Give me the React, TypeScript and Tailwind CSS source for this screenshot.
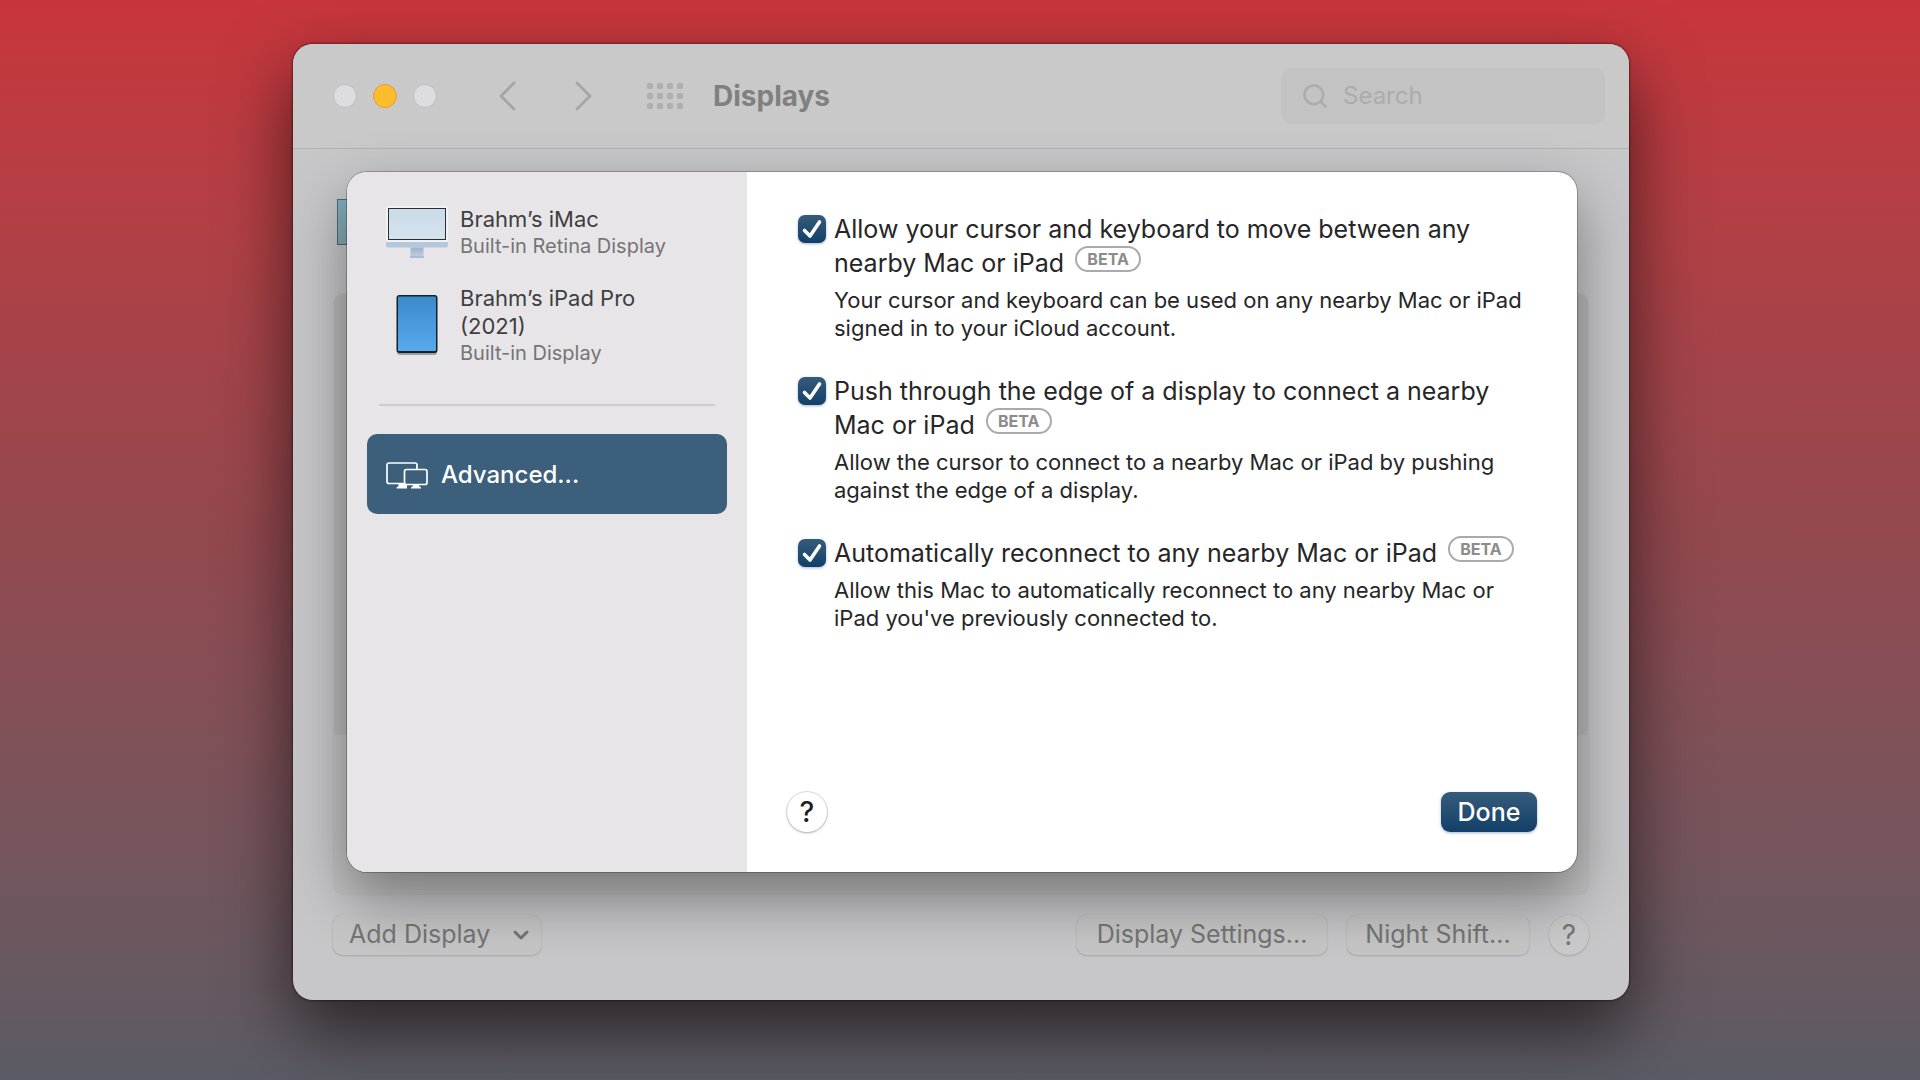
import { ChevronDown, Search } from "lucide-react";
import { useState } from "react";
import type { ReactNode } from "react";

interface SharingOption {
  id: string;
  title: string;
  description: string;
}

interface DisplayDevice {
  name: string;
  detail: string;
  icon: ReactNode;
}

const SHARING_OPTIONS: SharingOption[] = [
  {
    id: "cursor",
    title: "Allow your cursor and keyboard to move between any nearby Mac or iPad",
    description:
      "Your cursor and keyboard can be used on any nearby Mac or iPad signed in to your iCloud account.",
  },
  {
    id: "push",
    title: "Push through the edge of a display to connect a nearby Mac or iPad",
    description:
      "Allow the cursor to connect to a nearby Mac or iPad by pushing against the edge of a display.",
  },
  {
    id: "reconnect",
    title: "Automatically reconnect to any nearby Mac or iPad",
    description:
      "Allow this Mac to automatically reconnect to any nearby Mac or iPad you've previously connected to.",
  },
];

function IMacIcon() {
  return (
    <svg viewBox="0 0 62 54" className="w-[62px]" aria-hidden="true">
      <defs>
        <linearGradient id="imac-screen" x1="0" y1="0" x2="0" y2="1">
          <stop offset="0" stopColor="#c9dbe8" />
          <stop offset="1" stopColor="#d5e3ee" />
        </linearGradient>
        <linearGradient id="imac-stand" x1="0" y1="0" x2="0" y2="1">
          <stop offset="0" stopColor="#9db3cc" />
          <stop offset="1" stopColor="#bccde0" />
        </linearGradient>
      </defs>
      <path d="M0 37V3a2 2 0 0 1 2-2h58a2 2 0 0 1 2 2v34z" fill="#f0f1f4" />
      <rect x="2.5" y="3.5" width="57" height="31" fill="url(#imac-screen)" stroke="#2b2d30" />
      <path d="M0 37h62v3.500a2 2 0 0 1-2 2H2a2 2 0 0 1-2-2z" fill="#b4c7db" />
      <rect x="24.500" y="42.500" width="13" height="9" fill="url(#imac-stand)" />
      <path d="M24 51h14v1a1 1 0 0 1-1 1H25a1 1 0 0 1-1-1z" fill="#a9bdd3" />
    </svg>
  );
}

function IPadIcon() {
  return (
    <svg viewBox="0 0 44 62" className="w-11" aria-hidden="true">
      <defs>
        <linearGradient id="ipad-screen" x1="0" y1="0" x2="0" y2="1">
          <stop offset="0" stopColor="#3a8bcc" />
          <stop offset="1" stopColor="#58a9ec" />
        </linearGradient>
      </defs>
      <rect x="2" y="3" width="40" height="58" rx="3" fill="#9a9ca1" />
      <rect x="1.500" y="1" width="41" height="58" rx="3" fill="#14202c" />
      <rect x="3" y="2.500" width="38" height="54.500" rx="1" fill="url(#ipad-screen)" />
    </svg>
  );
}

function LinkedDisplaysIcon() {
  return (
    <svg
      viewBox="0 0 42 27"
      className="w-[42px]"
      fill="none"
      stroke="currentColor"
      strokeWidth="1.700"
      aria-hidden="true"
    >
      <path d="M17 21.500H3a2 2 0 0 1-2-2V3a2 2 0 0 1 2-2h26a2 2 0 0 1 2 2v4" />
      <rect x="18.500" y="7.500" width="22.500" height="15" rx="2" />
      <path d="M12.500 21h6v2h2.500v3.500H10.500v-1l2-1.500z" fill="currentColor" stroke="none" />
      <path d="M27 23h6l.5 1.500 1.500 1v1H25v-1l1.500-1z" fill="currentColor" stroke="none" />
    </svg>
  );
}

function AppGridIcon() {
  return (
    <svg viewBox="0 0 36 26" className="w-9" fill="currentColor" aria-hidden="true">
      {[0, 10, 20].map((y) =>
        [0, 10, 20, 30].map((x) => (
          <rect key={`${x}-${y}`} x={x} y={y} width="6" height="6" rx="1.500" />
        )),
      )}
    </svg>
  );
}

function NavChevron({ path }: { path: string }) {
  return (
    <svg
      viewBox="0 0 18 30"
      className="w-[18px]"
      fill="none"
      stroke="currentColor"
      strokeWidth="2.800"
      strokeLinecap="round"
      strokeLinejoin="round"
      aria-hidden="true"
    >
      <path d={path} />
    </svg>
  );
}

const DEVICES: DisplayDevice[] = [
  { name: "Brahm’s iMac", detail: "Built-in Retina Display", icon: <IMacIcon /> },
  { name: "Brahm’s iPad Pro (2021)", detail: "Built-in Display", icon: <IPadIcon /> },
];

function TitleBar() {
  return (
    <header className="flex h-[105px] items-center border-b border-[#b3b3b3] bg-[#c9c9c9] pr-6 pl-10">
      <div className="flex gap-4">
        <button
          type="button"
          aria-label="Close"
          className="size-6 rounded-full border border-[#bdbcbf] bg-[#dddce0]"
        />
        <button
          type="button"
          aria-label="Minimize"
          className="size-6 rounded-full border border-[#e0a02c] bg-[#fdbc2e]"
        />
        <button
          type="button"
          aria-label="Zoom"
          className="size-6 rounded-full border border-[#bdbcbf] bg-[#dddce0]"
        />
      </div>
      <nav className="ml-8 flex items-center text-[#a5a5a5]">
        <button type="button" aria-label="Back" className="flex w-[76px] justify-center">
          <NavChevron path="M16 2 3 15l13 13" />
        </button>
        <button type="button" aria-label="Forward" className="flex w-[76px] justify-center">
          <NavChevron path="m3 2 13 13L3 28" />
        </button>
        <button type="button" aria-label="Show all" className="ml-[26px] text-[#afafaf]">
          <AppGridIcon />
        </button>
      </nav>
      <h1 className="ml-[30px] text-[28px] font-bold text-[#808080]">Displays</h1>
      <label className="ml-auto flex h-14 w-[324px] items-center gap-[14px] rounded-[10px] bg-[#c3c3c3] px-5 text-[#acacac]">
        <Search className="size-7 shrink-0" strokeWidth={2.2} />
        <input
          type="search"
          aria-label="Search"
          placeholder="Search"
          className="w-full min-w-0 bg-transparent text-2xl outline-none placeholder:text-[#acacac]"
        />
      </label>
    </header>
  );
}

function DeviceRow({ name, detail, icon }: DisplayDevice) {
  return (
    <li className="flex items-center gap-3">
      <span className="flex w-[63px] shrink-0 justify-center">{icon}</span>
      <div className="max-w-[200px]">
        <p className="text-[22px] leading-7 text-[#3f3e41]">{name}</p>
        <p className="text-xl leading-[26px] whitespace-nowrap text-[#757477]">{detail}</p>
      </div>
    </li>
  );
}

function Sidebar() {
  return (
    <aside className="w-[400px] shrink-0 bg-[#e7e5e8] px-5 pt-[33px]">
      <ul className="flex flex-col gap-[25px] pl-[18px]">
        {DEVICES.map((device) => (
          <DeviceRow key={device.name} {...device} />
        ))}
      </ul>
      <hr className="mx-3 mt-[38px] mb-7 border-t-2 border-[#cdcbce]" />
      <button
        type="button"
        className="flex h-20 w-full items-center gap-[13px] rounded-[10px] bg-[#3c5f7c] px-[19px] pt-0.5 text-2xl font-medium text-white"
      >
        <LinkedDisplaysIcon />
        Advanced...
      </button>
    </aside>
  );
}

function OptionRow({ id, title, description }: SharingOption) {
  const [checked, setChecked] = useState(true);

  return (
    <div className="flex items-start gap-2">
      <span className="relative mt-[3px] size-7 shrink-0">
        <input
          id={id}
          type="checkbox"
          checked={checked}
          onChange={(event) => setChecked(event.target.checked)}
          aria-describedby={`${id}-description`}
          className="block size-7 appearance-none rounded-[7px] border border-gray-300 bg-white shadow-[0_1px_3px_#1b4a7a66] checked:border-0 checked:bg-linear-to-b checked:from-[#365c7b] checked:to-[#123f68]"
        />
        {checked ? (
          <svg
            viewBox="0 0 28 28"
            className="pointer-events-none absolute inset-0 size-7"
            fill="none"
            stroke="white"
            strokeWidth="3.600"
            strokeLinecap="round"
            strokeLinejoin="round"
            aria-hidden="true"
          >
            <path d="M6.500 15.500 12 21 21.500 7" />
          </svg>
        ) : null}
      </span>
      <div>
        <label htmlFor={id} className="block text-[25px] leading-[34px] text-[#262626]">
          {title}{" "}
          <span className="ml-1 inline-flex h-[26px] w-[66px] items-center justify-center rounded-full border-2 border-[#aaaaaa] align-[7px] text-base leading-none font-bold text-[#8c8c8c]">
            BETA
          </span>
        </label>
        <p id={`${id}-description`} className="mt-1.5 text-[22px] leading-7 text-[#262626]">
          {description}
        </p>
      </div>
    </div>
  );
}

function AdvancedSheet() {
  return (
    <section
      role="dialog"
      aria-label="Advanced display options"
      className="absolute top-32 right-[52px] left-[54px] flex min-h-[700px] overflow-hidden rounded-[20px] bg-white shadow-[0_0_0_1px_#00000040,0_26px_60px_#00000066]"
    >
      <Sidebar />
      <div className="flex grow flex-col justify-between pt-10 pr-10 pb-10 pl-[51px]">
        <div className="flex flex-col gap-8">
          {SHARING_OPTIONS.map((option) => (
            <OptionRow key={option.id} {...option} />
          ))}
        </div>
        <div className="-ml-[11px] flex items-center justify-between">
          <button
            type="button"
            aria-label="Help"
            className="size-10 rounded-full bg-white text-[28px] leading-10 font-medium text-[#1f1f1f] shadow-[0_0_0_1px_#0000001a,0_1px_3px_#00000040]"
          >
            ?
          </button>
          <button
            type="button"
            className="h-10 w-24 rounded-[9px] bg-linear-to-b from-[#365c7b] to-[#123f68] text-[25px] leading-[38px] font-medium text-white shadow-[0_1px_3px_#1b4a7a66]"
          >
            Done
          </button>
        </div>
      </div>
    </section>
  );
}

function Footer() {
  return (
    <footer className="flex h-10 items-center text-[25px] text-[#757575]">
      <button
        type="button"
        className="flex h-10 w-[208px] items-center justify-between rounded-[9px] bg-[#c6c6c6] pr-2 pl-4 shadow-[0_0_1px_#00000026,0_1px_2px_#00000026]"
      >
        Add Display
        <ChevronDown className="size-6" strokeWidth={3} />
      </button>
      <button
        type="button"
        className="ml-auto h-10 w-[250px] rounded-[9px] bg-[#c6c6c6] shadow-[0_0_1px_#00000026,0_1px_2px_#00000026]"
      >
        Display Settings...
      </button>
      <button
        type="button"
        className="ml-5 h-10 w-[182px] rounded-[9px] bg-[#c6c6c6] shadow-[0_0_1px_#00000026,0_1px_2px_#00000026]"
      >
        Night Shift...
      </button>
      <button
        type="button"
        aria-label="Help"
        className="ml-5 size-10 rounded-full bg-[#cacaca] text-[28px] leading-10 shadow-[0_0_1px_#00000026,0_1px_2px_#00000026]"
      >
        ?
      </button>
    </footer>
  );
}

export default function App() {
  return (
    <div className="min-h-screen bg-linear-to-b from-[#c8353c] via-[#92484f] to-[#5b5b65] pt-11 pr-6 pb-20 pl-[26px] font-['Inter',sans-serif]">
      <main className="relative mx-auto max-w-[1336px] overflow-hidden rounded-[20px] bg-[#c7c7c9] shadow-[0_0_2px_1px_#00000066,0_30px_70px_#00000099]">
        <TitleBar />
        <div className="px-10 pt-[50px] pb-[45px]">
          <div className="ml-1 h-[46px] w-20 border border-[#4d6a74] bg-linear-to-b from-[#7fb0be] to-[#86a8b0]" />
          <div className="mt-12 mb-5 overflow-hidden rounded-[10px] border border-[#bfbfbf] bg-[#c3c3c3]">
            <div className="h-[441px] bg-[#bababa]" />
            <div className="h-[159px]" />
          </div>
          <Footer />
        </div>
        <AdvancedSheet />
      </main>
    </div>
  );
}
